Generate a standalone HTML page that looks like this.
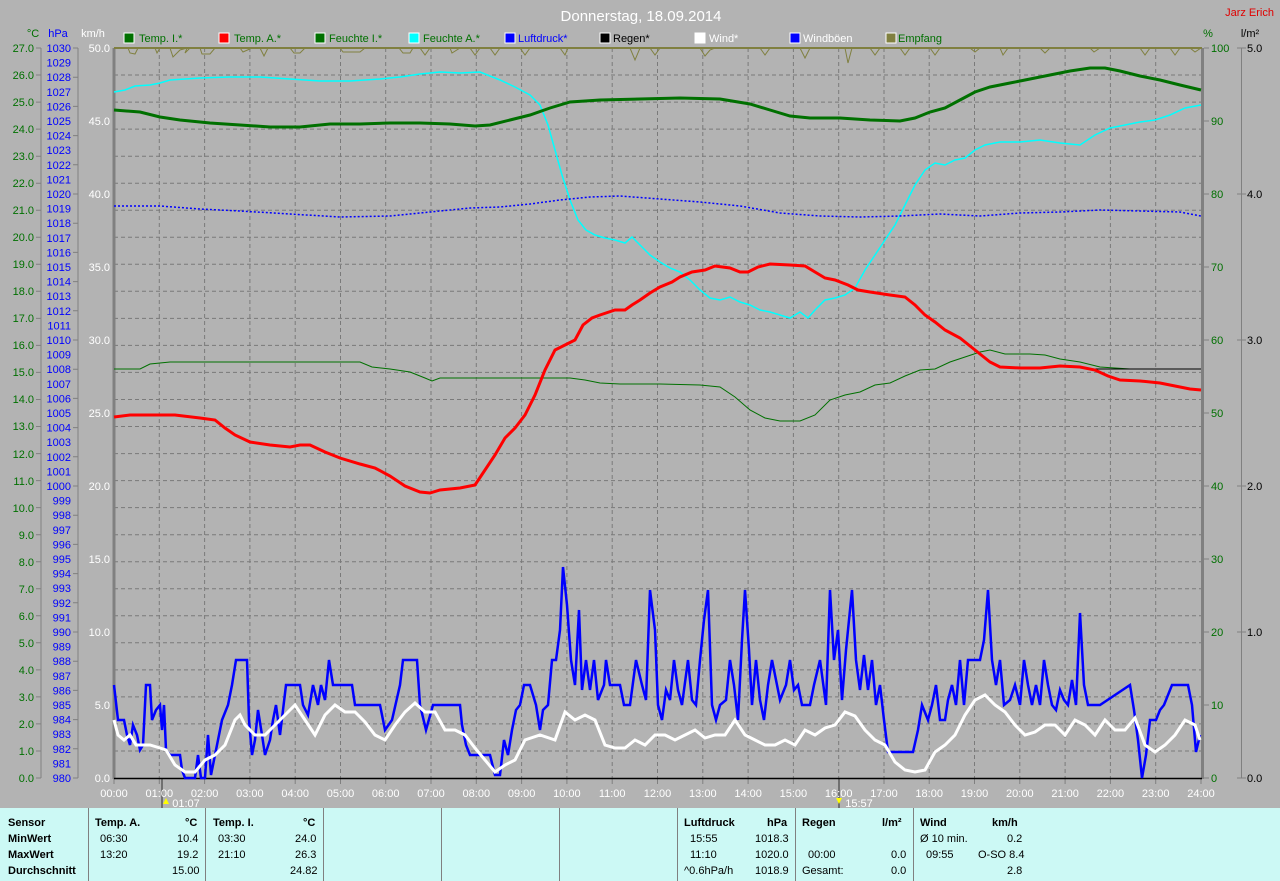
<!DOCTYPE html>
<html><head><meta charset="utf-8"><style>
html,body{margin:0;padding:0;background:#b3b3b3;width:1280px;height:881px;overflow:hidden;font-family:"Liberation Sans",sans-serif}
svg{position:absolute;left:0;top:0}
.tb{position:absolute;left:0;top:808px;width:1280px;height:73px;background:#ccf9f5;font-size:11px;color:#000}
.tb div{position:absolute;white-space:nowrap}
.b{font-weight:bold}
.sep{position:absolute;top:0;width:1px;height:73px;background:#808080}
</style></head><body>
<svg width="1280" height="881" font-family="Liberation Sans, sans-serif">
<text x="641" y="21" fill="#fff" font-size="15" text-anchor="middle">Donnerstag, 18.09.2014</text>
<text x="1274" y="16" fill="#e00000" font-size="11" text-anchor="end">Jarz Erich</text>
<g font-size="11">
<text x="33" y="37" fill="#007000" text-anchor="middle">°C</text>
<text x="58" y="37" fill="#0000ff" text-anchor="middle">hPa</text>
<text x="93" y="37" fill="#fff" text-anchor="middle">km/h</text>
<text x="1208" y="37" fill="#007000" text-anchor="middle">%</text>
<text x="1250" y="37" fill="#000" text-anchor="middle">l/m²</text>
</g>
<g font-size="11">
<rect x="124" y="33" width="10" height="10" fill="#007000" stroke="#fff"/><text x="139" y="42" fill="#007000">Temp. I.*</text>
<rect x="219" y="33" width="10" height="10" fill="#f00" stroke="#fff"/><text x="234" y="42" fill="#007000">Temp. A.*</text>
<rect x="315" y="33" width="10" height="10" fill="#007000" stroke="#fff"/><text x="329" y="42" fill="#007000">Feuchte I.*</text>
<rect x="409" y="33" width="10" height="10" fill="#0ff" stroke="#fff"/><text x="423" y="42" fill="#007000">Feuchte A.*</text>
<rect x="505" y="33" width="10" height="10" fill="#00f" stroke="#fff"/><text x="518" y="42" fill="#0000ff">Luftdruck*</text>
<rect x="600" y="33" width="10" height="10" fill="#000" stroke="#fff"/><text x="613" y="42" fill="#000">Regen*</text>
<rect x="695" y="33" width="10" height="10" fill="#fff" stroke="#fff"/><text x="709" y="42" fill="#fff">Wind*</text>
<rect x="790" y="33" width="10" height="10" fill="#00f" stroke="#fff"/><text x="803" y="42" fill="#fff">Windböen</text>
<rect x="886" y="33" width="10" height="10" fill="#808040" stroke="#fff"/><text x="898" y="42" fill="#007000">Empfang</text>
</g>
<g stroke="#808080" stroke-width="1" fill="none">
<path d="M41 48V778M78 48V778M1241.5 48V778"/>
<path d="M36 48H41M36 75H41M36 102.1H41M36 129.1H41M36 156.2H41M36 183.2H41M36 210.2H41M36 237.3H41M36 264.3H41M36 291.3H41M36 318.4H41M36 345.4H41M36 372.4H41M36 399.5H41M36 426.5H41M36 453.6H41M36 480.6H41M36 507.6H41M36 534.7H41M36 561.7H41M36 588.7H41M36 615.8H41M36 642.8H41M36 669.9H41M36 696.9H41M36 723.9H41M36 751H41M36 778H41"/>
<path d="M73 48H78M73 77.2H78M73 106.4H78M73 135.6H78M73 164.8H78M73 194H78M73 223.2H78M73 252.4H78M73 281.6H78M73 310.8H78M73 340H78M73 369.2H78M73 398.4H78M73 427.6H78M73 456.8H78M73 486H78M73 515.2H78M73 544.4H78M73 573.6H78M73 602.8H78M73 632H78M73 661.2H78M73 690.4H78M73 719.6H78M73 748.8H78M73 778H78"/>
<path d="M1204 48H1209M1204 121H1209M1204 194H1209M1204 267H1209M1204 340H1209M1204 413H1209M1204 486H1209M1204 559H1209M1204 632H1209M1204 705H1209M1204 778H1209"/>
<path d="M1237 48H1246M1237 194H1246M1237 340H1246M1237 486H1246M1237 632H1246M1237 778H1246"/>
</g>
<g stroke="#7a7a7a" stroke-width="1" stroke-dasharray="4,3" fill="none">
<path d="M114 75H1201M114 102.1H1201M114 129.1H1201M114 156.2H1201M114 183.2H1201M114 210.2H1201M114 237.3H1201M114 264.3H1201M114 291.3H1201M114 318.4H1201M114 345.4H1201M114 372.4H1201M114 399.5H1201M114 426.5H1201M114 453.6H1201M114 480.6H1201M114 507.6H1201M114 534.7H1201M114 561.7H1201M114 588.7H1201M114 615.8H1201M114 642.8H1201M114 669.9H1201M114 696.9H1201M114 723.9H1201M114 751H1201"/>
<path d="M159.3 48V778M204.6 48V778M249.9 48V778M295.2 48V778M340.5 48V778M385.7 48V778M431 48V778M476.3 48V778M521.6 48V778M566.9 48V778M612.2 48V778M657.5 48V778M702.8 48V778M748.1 48V778M793.4 48V778M838.7 48V778M884 48V778M929.2 48V778M974.5 48V778M1019.8 48V778M1065.1 48V778M1110.4 48V778M1155.7 48V778"/>
</g>
<g stroke="#808080" stroke-width="1"><path d="M114 778V784M159.3 778V784M204.6 778V784M249.9 778V784M295.2 778V784M340.5 778V784M385.7 778V784M431 778V784M476.3 778V784M521.6 778V784M566.9 778V784M612.2 778V784M657.5 778V784M702.8 778V784M748.1 778V784M793.4 778V784M838.7 778V784M884 778V784M929.2 778V784M974.5 778V784M1019.8 778V784M1065.1 778V784M1110.4 778V784M1155.7 778V784M1201 778V784"/></g>
<path d="M162 778V808M839 778V808" stroke="#707070" stroke-width="2"/>
<path d="M114 48V779M1202.5 48V779" stroke="#808080" stroke-width="3"/>
<path d="M114 48H1202" stroke="#808040" stroke-width="2"/>
<path d="M114 778.5H1202" stroke="#000" stroke-width="1.5"/>
<g font-size="11" fill="#007000" text-anchor="end">
<text x="34" y="52">27.0</text><text x="34" y="79">26.0</text><text x="34" y="106">25.0</text><text x="34" y="133">24.0</text><text x="34" y="160">23.0</text><text x="34" y="187">22.0</text><text x="34" y="214">21.0</text><text x="34" y="241">20.0</text><text x="34" y="268">19.0</text><text x="34" y="295">18.0</text><text x="34" y="322">17.0</text><text x="34" y="349">16.0</text><text x="34" y="376">15.0</text><text x="34" y="403">14.0</text><text x="34" y="430">13.0</text><text x="34" y="458">12.0</text><text x="34" y="485">11.0</text><text x="34" y="512">10.0</text><text x="34" y="539">9.0</text><text x="34" y="566">8.0</text><text x="34" y="593">7.0</text><text x="34" y="620">6.0</text><text x="34" y="647">5.0</text><text x="34" y="674">4.0</text><text x="34" y="701">3.0</text><text x="34" y="728">2.0</text><text x="34" y="755">1.0</text><text x="34" y="782">0.0</text>
</g>
<g font-size="11" fill="#0000ff" text-anchor="end">
<text x="71" y="52">1030</text><text x="71" y="66.6">1029</text><text x="71" y="81.2">1028</text><text x="71" y="95.8">1027</text><text x="71" y="110.4">1026</text><text x="71" y="125">1025</text><text x="71" y="139.6">1024</text><text x="71" y="154.2">1023</text><text x="71" y="168.8">1022</text><text x="71" y="183.4">1021</text><text x="71" y="198">1020</text><text x="71" y="212.6">1019</text><text x="71" y="227.2">1018</text><text x="71" y="241.8">1017</text><text x="71" y="256.4">1016</text><text x="71" y="271">1015</text><text x="71" y="285.6">1014</text><text x="71" y="300.2">1013</text><text x="71" y="314.8">1012</text><text x="71" y="329.4">1011</text><text x="71" y="344">1010</text><text x="71" y="358.6">1009</text><text x="71" y="373.2">1008</text><text x="71" y="387.8">1007</text><text x="71" y="402.4">1006</text><text x="71" y="417">1005</text><text x="71" y="431.6">1004</text><text x="71" y="446.2">1003</text><text x="71" y="460.8">1002</text><text x="71" y="475.4">1001</text><text x="71" y="490">1000</text><text x="71" y="504.6">999</text><text x="71" y="519.2">998</text><text x="71" y="533.8">997</text><text x="71" y="548.4">996</text><text x="71" y="563">995</text><text x="71" y="577.6">994</text><text x="71" y="592.2">993</text><text x="71" y="606.8">992</text><text x="71" y="621.4">991</text><text x="71" y="636">990</text><text x="71" y="650.6">989</text><text x="71" y="665.2">988</text><text x="71" y="679.8">987</text><text x="71" y="694.4">986</text><text x="71" y="709">985</text><text x="71" y="723.6">984</text><text x="71" y="738.2">983</text><text x="71" y="752.8">982</text><text x="71" y="767.4">981</text><text x="71" y="782">980</text>
</g>
<g font-size="11" fill="#fff" text-anchor="end">
<text x="110" y="52">50.0</text><text x="110" y="125">45.0</text><text x="110" y="198">40.0</text><text x="110" y="271">35.0</text><text x="110" y="344">30.0</text><text x="110" y="417">25.0</text><text x="110" y="490">20.0</text><text x="110" y="563">15.0</text><text x="110" y="636">10.0</text><text x="110" y="709">5.0</text><text x="110" y="782">0.0</text>
</g>
<g font-size="11" fill="#007000">
<text x="1211" y="52">100</text><text x="1211" y="125">90</text><text x="1211" y="198">80</text><text x="1211" y="271">70</text><text x="1211" y="344">60</text><text x="1211" y="417">50</text><text x="1211" y="490">40</text><text x="1211" y="563">30</text><text x="1211" y="636">20</text><text x="1211" y="709">10</text><text x="1211" y="782">0</text>
</g>
<g font-size="11" fill="#000">
<text x="1247" y="52">5.0</text><text x="1247" y="198">4.0</text><text x="1247" y="344">3.0</text><text x="1247" y="490">2.0</text><text x="1247" y="636">1.0</text><text x="1247" y="782">0.0</text>
</g>
<g font-size="11" fill="#fff" text-anchor="middle">
<text x="114" y="797">00:00</text><text x="159.3" y="797">01:00</text><text x="204.6" y="797">02:00</text><text x="249.9" y="797">03:00</text><text x="295.2" y="797">04:00</text><text x="340.5" y="797">05:00</text><text x="385.7" y="797">06:00</text><text x="431" y="797">07:00</text><text x="476.3" y="797">08:00</text><text x="521.6" y="797">09:00</text><text x="566.9" y="797">10:00</text><text x="612.2" y="797">11:00</text><text x="657.5" y="797">12:00</text><text x="702.8" y="797">13:00</text><text x="748.1" y="797">14:00</text><text x="793.4" y="797">15:00</text><text x="838.7" y="797">16:00</text><text x="884" y="797">17:00</text><text x="929.2" y="797">18:00</text><text x="974.5" y="797">19:00</text><text x="1019.8" y="797">20:00</text><text x="1065.1" y="797">21:00</text><text x="1110.4" y="797">22:00</text><text x="1155.7" y="797">23:00</text><text x="1201" y="797">24:00</text>
<text x="186" y="807">01:07</text><text x="859" y="807">15:57</text>
</g>
<path d="M163 804l3-6 3 6z" fill="#ff0"/><path d="M836 798l3 6 3-6z" fill="#ff0"/>
<polyline fill="none" stroke="#808040" stroke-width="1" points="114,48 128,48 130,53 135,54 138,48 155,48 157,53 160,48 170,48 173,57 180,50 187,48 185,53 190,48 200,48 202,54 210,54 215,48 240,48 243,52 252,48 260,48 264,56 268,48 290,48 294,53 300,53 305,48 340,48 343,52 350,52 360,52 365,48 399,48 403,53 410,53 413,48 420,48 425,55 430,48 450,48 452,53 460,48 470,48 475,55 480,48 490,48 495,55 500,48 520,48 525,55 530,48 560,48 565,55 568,48 630,48 635,60 640,48 650,48 655,55 660,48 700,48 705,56 710,50 715,48 760,48 765,55 770,48 800,48 805,58 810,48 845,48 848,63 852,48 870,48 875,55 880,48 900,48 905,55 910,48 930,48 935,55 940,48 970,48 975,52 980,48 1000,48 1003,55 1008,48 1040,48 1045,53 1050,48 1090,48 1094,52 1100,48 1140,48 1145,55 1150,48 1170,48 1175,55 1180,48 1190,48 1195,52 1201,48"/>
<polyline fill="none" stroke="#0ff" stroke-width="1.5" points="114,92 125,90 135,86 150,85 160,83 170,80 185,79 200,78 230,77 260,77 290,79 320,81 350,81 380,79 400,77 420,74 440,72 460,73 480,72 500,80 515,87 530,95 540,105 548,125 555,150 562,175 570,200 578,220 586,230 595,235 605,238 615,240 625,243 632,237 640,245 650,255 660,262 670,268 680,272 690,280 700,290 710,298 720,300 730,297 740,302 750,305 760,310 770,312 780,315 790,318 800,312 808,318 815,310 825,300 835,298 845,295 855,288 865,270 875,255 885,240 895,225 905,205 915,185 925,170 935,163 945,165 955,160 965,158 975,150 985,145 1000,142 1020,142 1040,140 1060,143 1080,145 1095,135 1110,128 1125,125 1140,122 1155,120 1170,115 1185,108 1201,105"/>
<polyline fill="none" stroke="#007000" stroke-width="1" points="114,369 140,369 150,364 170,362 250,362 330,362 360,362 372,367 390,369 410,372 425,378 432,381 440,378 460,378 520,378 545,378 570,378 585,380 600,383 620,384 660,384 700,385 720,387 735,397 750,410 765,418 780,421 800,421 815,415 830,400 845,395 860,392 875,385 890,383 905,376 920,370 935,369 950,362 965,357 980,352 990,350 1005,354 1030,354 1045,355 1060,359 1080,362 1100,367 1130,369 1201,369"/>
<polyline fill="none" stroke="#00f" stroke-width="1.5" stroke-dasharray="2,2" points="114,206 160,206 200,209 240,211 290,214 340,217 390,216 430,212 470,208 500,207 530,204 560,200 590,197 620,196 660,199 700,202 740,206 780,213 820,216 860,217 900,216 940,214 980,216 1020,213 1060,212 1100,210 1140,211 1180,212 1201,216"/>
<polyline fill="none" stroke="#000" stroke-width="1" points="1090,369 1201,369"/>
<polyline fill="none" stroke="#007000" stroke-width="3" points="114,110 140,112 160,117 180,120 210,123 240,125 270,127 300,127 330,124 360,124 390,123 420,123 450,124 475,126 490,125 510,120 530,115 550,108 570,102 600,100 640,99 680,98 720,99 750,104 770,110 790,116 810,118 840,118 870,120 900,121 915,118 930,112 945,108 960,100 975,92 990,87 1010,83 1030,79 1050,75 1070,71 1090,68 1105,68 1120,71 1140,76 1160,80 1180,85 1201,90"/>
<polyline fill="none" stroke="#f00" stroke-width="3" points="114,417 130,415 150,415 175,415 200,418 215,420 225,428 235,435 250,442 270,445 290,447 300,445 310,445 325,452 340,458 360,464 375,468 390,476 405,486 420,492 430,493 440,490 460,488 475,485 485,470 495,455 505,438 515,428 525,415 535,395 545,370 555,350 565,345 575,340 583,325 592,318 600,315 615,310 625,310 632,305 640,300 650,293 660,287 672,282 680,277 692,272 705,270 715,266 730,268 740,272 748,272 758,267 770,264 790,265 805,266 815,272 825,278 835,280 848,285 858,290 870,292 890,295 905,297 915,305 925,315 935,322 945,330 960,338 975,350 990,362 1000,367 1020,368 1040,368 1060,366 1080,367 1095,370 1108,376 1120,380 1140,381 1160,383 1175,386 1190,389 1201,390"/>
<polyline fill="none" stroke="#00f" stroke-width="2.5" points="114,685 118,720 124,720 127,735 130,745 133,725 137,735 140,750 143,745 146,685 150,685 152,720 156,710 160,705 162,730 164,705 166,750 170,755 180,755 182,770 185,778 195,778 198,755 201,778 205,778 208,735 211,775 214,760 218,740 222,720 228,705 232,685 236,660 247,660 249,720 252,755 255,740 258,710 262,735 265,755 270,740 273,720 276,705 280,735 283,710 286,685 300,685 303,705 308,715 313,685 318,705 321,685 325,700 329,660 333,685 352,685 355,705 380,705 385,730 392,720 400,685 403,660 417,660 420,705 426,730 433,705 460,705 462,725 466,745 470,755 490,755 495,775 500,775 504,740 508,755 512,730 516,710 520,705 524,685 530,685 536,705 540,730 543,710 548,705 552,660 556,660 560,630 563,567 567,605 571,660 575,685 579,610 582,690 586,660 590,690 594,660 598,700 604,685 606,660 610,685 620,685 624,705 630,705 636,660 642,685 646,700 650,590 655,630 658,705 662,720 666,690 670,700 674,660 678,690 682,705 688,660 692,700 696,705 700,660 704,620 708,590 712,705 716,720 720,705 726,700 730,660 734,685 738,720 742,640 745,590 749,650 752,705 756,660 760,700 764,720 768,685 772,660 776,680 780,700 786,685 790,660 794,690 798,685 802,705 810,705 814,685 820,660 826,705 830,590 834,660 838,630 842,700 846,650 852,590 856,660 860,690 864,655 868,690 872,660 876,705 880,685 884,720 888,752 913,752 918,730 922,705 928,720 932,705 936,685 940,720 945,720 948,700 952,685 956,705 960,660 964,705 968,660 980,660 984,640 988,590 992,660 996,685 1000,660 1004,705 1010,700 1015,685 1020,705 1024,660 1028,685 1032,705 1036,685 1040,705 1044,660 1048,685 1052,705 1056,710 1060,690 1064,700 1068,705 1072,680 1076,705 1080,613 1084,685 1088,705 1100,705 1130,685 1134,710 1138,740 1142,778 1146,755 1150,720 1156,720 1160,710 1164,705 1172,685 1188,685 1192,705 1196,752 1200,735"/>
<polyline fill="none" stroke="#fff" stroke-width="3" points="114,720 118,735 124,740 130,735 136,745 142,745 150,745 160,748 166,750 175,765 185,772 195,772 205,760 215,755 225,745 235,720 240,715 245,725 255,735 265,735 275,725 285,715 295,705 305,720 315,735 325,715 335,705 345,712 355,712 365,722 375,735 385,740 395,725 405,712 415,703 425,712 435,712 445,730 455,730 465,735 475,748 485,760 495,772 505,765 515,760 525,740 540,735 555,740 565,712 575,720 585,715 595,720 605,745 615,748 625,748 635,740 645,745 655,735 665,735 675,740 685,735 695,730 705,738 715,735 725,735 735,720 745,735 755,740 765,745 775,745 785,740 795,745 805,730 815,735 825,728 835,725 845,712 855,716 865,730 875,740 885,745 895,762 905,770 915,772 925,770 935,752 945,745 955,735 965,715 975,700 985,695 995,705 1005,712 1015,725 1025,735 1035,732 1045,725 1055,725 1065,735 1075,720 1085,725 1095,735 1105,720 1115,730 1125,730 1135,718 1145,745 1155,752 1165,745 1175,735 1185,720 1195,725 1200,740"/>
</svg>
<div class="tb">
<div class="sep" style="left:88px"></div><div class="sep" style="left:205px"></div><div class="sep" style="left:323px"></div><div class="sep" style="left:441px"></div><div class="sep" style="left:559px"></div><div class="sep" style="left:677px"></div><div class="sep" style="left:795px"></div><div class="sep" style="left:913px"></div>
<div class="b" style="left:8px;top:9px">Sensor</div><div class="b" style="left:8px;top:25px">MinWert</div><div class="b" style="left:8px;top:41px">MaxWert</div><div class="b" style="left:8px;top:57px">Durchschnitt</div>
<div class="b" style="left:95px;top:9px">Temp. A.</div><div class="b" style="left:185px;top:9px">°C</div>
<div style="left:100px;top:25px">06:30</div><div style="left:177px;top:25px">10.4</div>
<div style="left:100px;top:41px">13:20</div><div style="left:177px;top:41px">19.2</div>
<div style="left:172px;top:57px">15.00</div>
<div class="b" style="left:213px;top:9px">Temp. I.</div><div class="b" style="left:303px;top:9px">°C</div>
<div style="left:218px;top:25px">03:30</div><div style="left:295px;top:25px">24.0</div>
<div style="left:218px;top:41px">21:10</div><div style="left:295px;top:41px">26.3</div>
<div style="left:290px;top:57px">24.82</div>
<div class="b" style="left:684px;top:9px">Luftdruck</div><div class="b" style="left:767px;top:9px">hPa</div>
<div style="left:690px;top:25px">15:55</div><div style="left:755px;top:25px">1018.3</div>
<div style="left:690px;top:41px">11:10</div><div style="left:755px;top:41px">1020.0</div>
<div style="left:684px;top:57px">^0.6hPa/h</div><div style="left:755px;top:57px">1018.9</div>
<div class="b" style="left:802px;top:9px">Regen</div><div class="b" style="left:882px;top:9px">l/m²</div>
<div style="left:808px;top:41px">00:00</div><div style="left:891px;top:41px">0.0</div>
<div style="left:802px;top:57px">Gesamt:</div><div style="left:891px;top:57px">0.0</div>
<div class="b" style="left:920px;top:9px">Wind</div><div class="b" style="left:992px;top:9px">km/h</div>
<div style="left:920px;top:25px">Ø 10 min.</div><div style="left:1007px;top:25px">0.2</div>
<div style="left:926px;top:41px">09:55</div><div style="left:978px;top:41px">O-SO 8.4</div>
<div style="left:1007px;top:57px">2.8</div>
</div>
</body></html>
